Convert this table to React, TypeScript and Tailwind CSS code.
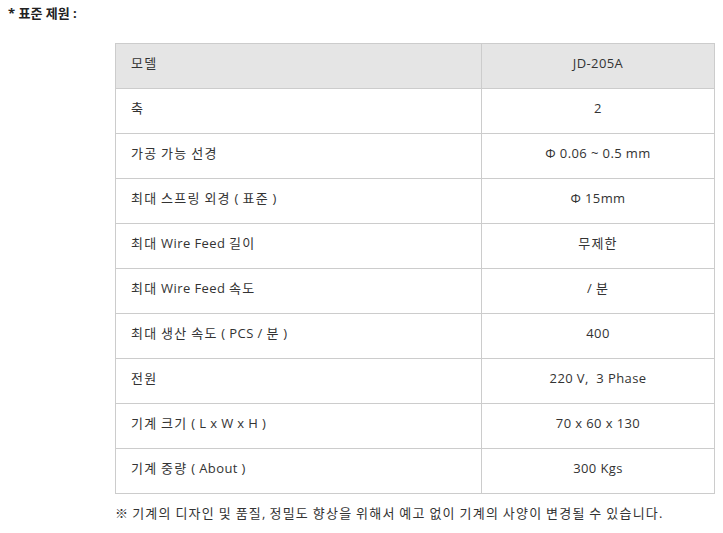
import React from "react";

const rows: [string, string][] = [
  ["축", "2"],
  ["가공 가능 선경", "Φ 0.06 ~ 0.5 mm"],
  ["최대 스프링 외경 ( 표준 )", "Φ 15mm"],
  ["최대 Wire Feed 길이", "무제한"],
  ["최대 Wire Feed 속도", "/ 분"],
  ["최대 생산 속도 ( PCS / 분 )", "400"],
  ["전원", "220 V,  3 Phase"],
  ["기계 크기 ( L x W x H )", "70 x 60 x 130"],
  ["기계 중량 ( About )", "300 Kgs"],
];

function T({ s }: { s: string }) {
  const parts = s.split(/([\uAC00-\uD7A3]+)/).filter((p) => p.length > 0);
  return (
    <>
      {parts.map((p, i) =>
        /[\uAC00-\uD7A3]/.test(p) ? (
          <span key={i} className="tracking-[1.2px]">{p}</span>
        ) : (
          <span key={i}>{p}</span>
        )
      )}
    </>
  );
}

export default function App() {
  return (
    <div
      className="w-[723px] h-[533px] bg-white text-[#333] text-[13px] leading-[20px] tracking-[0.4px]"
      style={{ fontFamily: '"Open Sans", "Noto Sans CJK KR", sans-serif' }}
    >
      <div className="pl-[8px] pt-[3px] font-bold text-[#222] h-[43px] tracking-normal">* 표준 제원 :</div>
      <div className="pl-[115px]">
        <table className="w-[600px] border-collapse border border-[#cccccc]">
          <tbody>
            <tr className="bg-[#e5e5e5] h-[45px]">
              <td className="w-[366px] border border-[#cccccc] pl-[15px] pb-[6px] align-middle"><T s="모델" /></td>
              <td className="border border-[#cccccc] text-center pb-[6px] align-middle">JD-205A</td>
            </tr>
            {rows.map(([a, b]) => (
              <tr key={a} className="h-[45px]">
                <td className="border border-[#cccccc] pl-[15px] pb-[6px] align-middle whitespace-pre"><T s={a} /></td>
                <td className="border border-[#cccccc] text-center pb-[6px] align-middle whitespace-pre"><T s={b} /></td>
              </tr>
            ))}
          </tbody>
        </table>
        <div className="mt-[9px] whitespace-pre"><T s="※ 기계의 디자인 및 품질, 정밀도 향상을 위해서 예고 없이 기계의 사양이 변경될 수 있습니다." /></div>
      </div>
    </div>
  );
}
